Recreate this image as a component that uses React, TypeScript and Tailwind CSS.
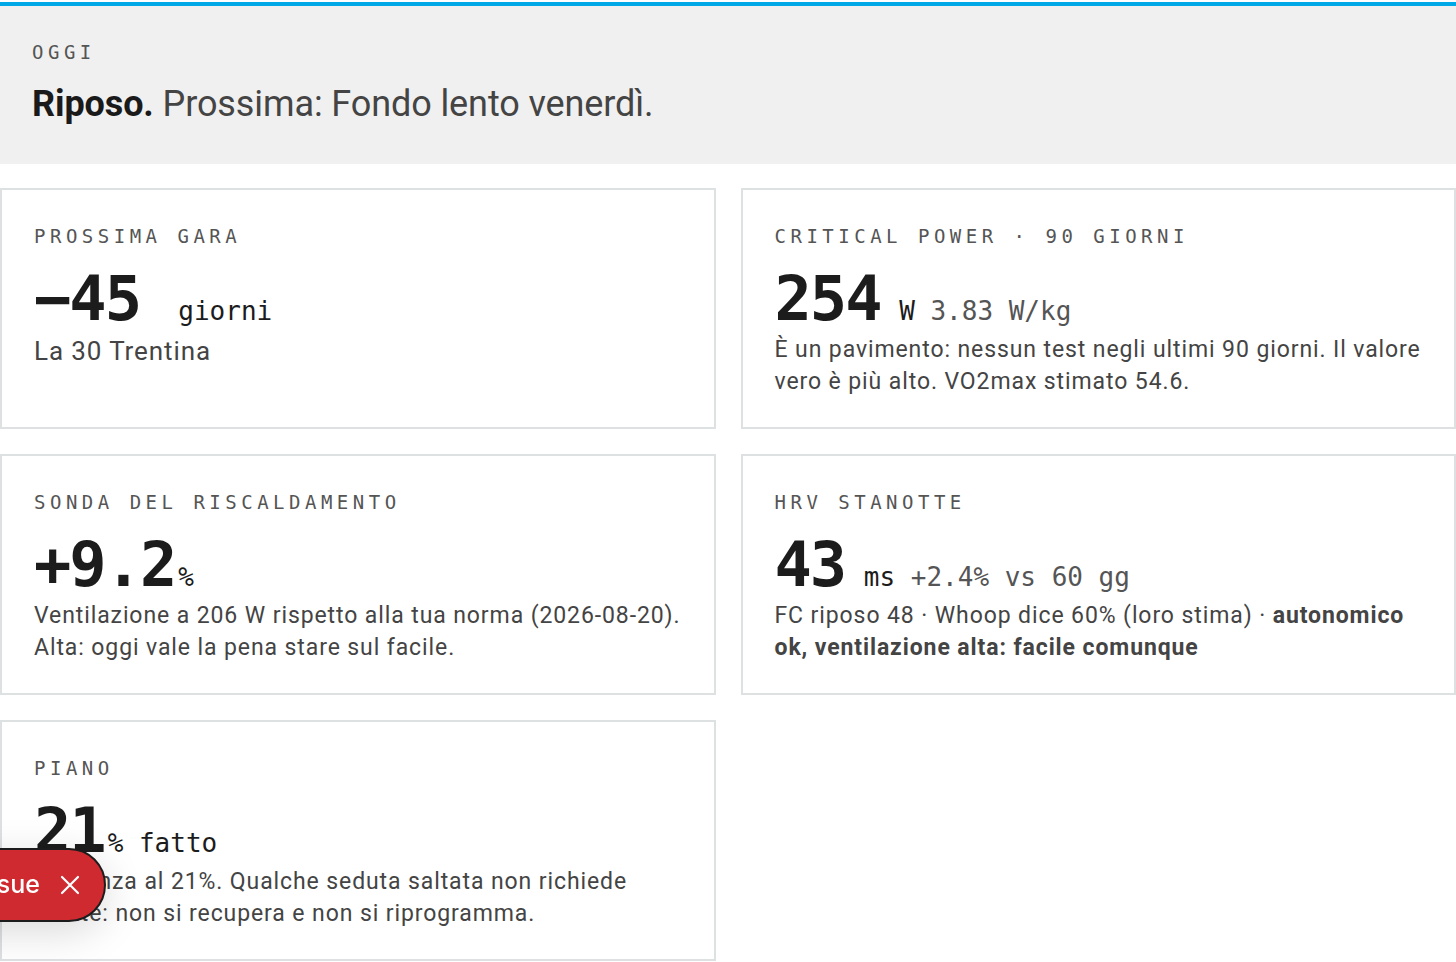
import type { ReactNode } from 'react';

type Stat = {
  label: string;
  value: string;
  unit?: string;
  extra?: string;
  body: ReactNode;
  big?: boolean;
};

const stats: Stat[] = [
  {
    label: 'Prossima gara',
    value: '−45',
    unit: '  giorni',
    body: 'La 30 Trentina',
    big: true,
  },
  {
    label: 'Critical power · 90 giorni',
    value: '254',
    unit: ' W',
    extra: ' 3.83 W/kg',
    body: 'È un pavimento: nessun test negli ultimi 90 giorni. Il valore vero è più alto. VO2max stimato 54.6.',
  },
  {
    label: 'Sonda del riscaldamento',
    value: '+9.2',
    unit: '%',
    body: 'Ventilazione a 206 W rispetto alla tua norma (2026-08-20). Alta: oggi vale la pena stare sul facile.',
  },
  {
    label: 'HRV stanotte',
    value: '43',
    unit: ' ms',
    extra: ' +2.4% vs 60 gg',
    body: (
      <>
        FC riposo 48 · Whoop dice 60% (loro stima) ·{' '}
        <strong className="font-bold">autonomico ok, ventilazione alta: facile comunque</strong>
      </>
    ),
  },
  {
    label: 'Piano',
    value: '21',
    unit: '% fatto',
    body: 'Aderenza al 21%. Qualche seduta saltata non richiede niente: non si recupera e non si riprogramma.',
  },
];

function Label({ children }: { children: ReactNode }) {
  return (
    <div className="font-['DejaVu_Sans_Mono',monospace] text-[19px] leading-[28px] tracking-[4.5px] uppercase text-[#555]">
      {children}
    </div>
  );
}

function StatCard({ stat }: { stat: Stat }) {
  return (
    <div className="border-2 border-[#dde1e1] bg-white px-[32px] pt-[32px] pb-[29px]">
      <Label>{stat.label}</Label>
      <div className="mt-[18px] flex items-baseline font-['DejaVu_Sans_Mono',monospace] whitespace-pre">
        <span className="text-[62px] leading-[62px] font-bold text-[#1c1c1c] tracking-[-2px]">{stat.value}</span>
        {stat.unit && (
          <span className={stat.big ? 'ml-[7px] text-[26px] text-[#1c1c1c]' : 'ml-[3px] text-[26px] text-[#1c1c1c]'}>
            {stat.unit}
          </span>
        )}
        {stat.extra && <span className="text-[26px] text-[#555]">{stat.extra}</span>}
      </div>
      <p
        className={
          stat.big
            ? "mt-[4px] font-['Roboto',sans-serif] text-[26px] leading-[32px] tracking-[0.9px] text-[#444]"
            : "mt-[3px] font-['Roboto',sans-serif] text-[23px] leading-[32px] tracking-[0.9px] text-[#444]"
        }
      >
        {stat.body}
      </p>
    </div>
  );
}

export default function App() {
  return (
    <div className="min-h-screen bg-white pt-[2px]">
      <header className="border-t-4 border-[#00a8e8] bg-[#f0f0f0] px-[32px] pt-[32px] pb-[38px]">
        <Label>Oggi</Label>
        <h1 className="mt-[16px] font-['Roboto',sans-serif] text-[36px] leading-[44px] tracking-[-0.1px] text-[#444]">
          <span className="font-bold text-[#1a1a1a]">Riposo.</span> Prossima: Fondo lento venerdì.
        </h1>
      </header>

      <div className="mt-[24px] grid grid-cols-2 gap-[25px]">
        {stats.map((s) => (
          <StatCard key={s.label} stat={s} />
        ))}
      </div>

      {/* dev overlay pill, pinned bottom-left */}
      <div className="fixed bottom-[40px] left-0 flex w-[106px] justify-end">
        <div className="flex h-[74px] shrink-0 items-center rounded-full border-2 border-[#1c1c1c] bg-[#cf2a30] pl-[24px] pr-[24px] shadow-[0_10px_40px_rgba(0,0,0,0.15)]">
          <span className="font-['Inter',sans-serif] text-[25px] font-medium text-white">1 Issue</span>
          <svg className="ml-[20px] h-[20px] w-[20px]" viewBox="0 0 20 20" fill="none" stroke="white" strokeWidth={2.2} strokeLinecap="round">
            <path d="M2 2 18 18M18 2 2 18" />
          </svg>
        </div>
      </div>
    </div>
  );
}
